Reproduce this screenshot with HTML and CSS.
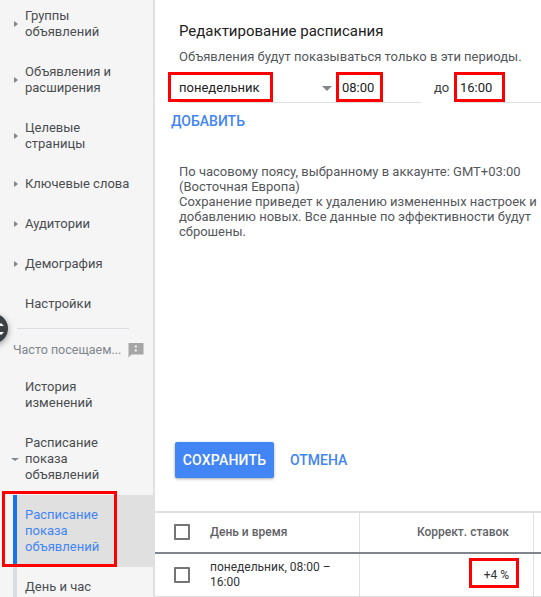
FILE: index.html
```html
<!DOCTYPE html>
<html lang="ru">
<head>
  <meta charset="UTF-8">
  <meta name="viewport" content="width=device-width, initial-scale=1.0">
  <title>Расписание показа объявлений</title>
  <link rel="stylesheet" href="styles.css">
</head>
<body>
  <div class="page">
    <nav class="sidebar">
      <div class="nav-item"><span class="arrow"></span>Группы<br>объявлений</div>
      <div class="nav-item"><span class="arrow"></span>Объявления и<br>расширения</div>
      <div class="nav-item"><span class="arrow"></span>Целевые<br>страницы</div>
      <div class="nav-item"><span class="arrow"></span>Ключевые слова</div>
      <div class="nav-item"><span class="arrow"></span>Аудитории</div>
      <div class="nav-item"><span class="arrow"></span>Демография</div>
      <div class="nav-item">Настройки</div>
      <div class="nav-divider"></div>
      <div class="nav-frequent">
        <span>Часто посещаем...</span>
        <svg class="feedback-icon" width="16" height="16" viewBox="0 0 16 16"><path d="M0.5 1h15v11.5H3.5l-3 3z" fill="#a6a6a6"/><path d="M6.8 3.5h2v2h-2zM6.8 7.5h2v2h-2z" fill="#f5f5f5"/></svg>
      </div>
      <div class="nav-item">История<br>изменений</div>
      <div class="nav-item"><span class="arrow-down"></span>Расписание<br>показа<br>объявлений</div>
      <div class="nav-item nav-active">Расписание<br>показа<br>объявлений</div>
      <div class="nav-item nav-sub">День и час</div>
    </nav>

    <main class="content">
      <section class="editor">
        <h1 class="editor-title">Редактирование расписания</h1>
        <p class="editor-sub">Объявления будут показываться только в эти периоды.</p>
        <div class="period-row">
          <div class="field field-day">понедельник<span class="caret"></span></div>
          <div class="field field-from">08:00</div>
          <div class="period-to">до</div>
          <div class="field field-till">16:00</div>
        </div>
        <a class="add-link">ДОБАВИТЬ</a>
        <p class="editor-note">По часовому поясу, выбранному в аккаунте: GMT+03:00<br>(Восточная Европа)<br>Сохранение приведет к удалению измененных настроек и<br>добавлению новых. Все данные по эффективности будут<br>сброшены.</p>
        <div class="actions">
          <button class="btn-save">СОХРАНИТЬ</button>
          <a class="btn-cancel">ОТМЕНА</a>
        </div>
      </section>

      <section class="table">
        <div class="table-row table-head">
          <div class="cell cell-check"><span class="checkbox"></span></div>
          <div class="cell cell-day">День и время</div>
          <div class="cell cell-bid">Коррект. ставок</div>
          <div class="cell cell-rest"></div>
        </div>
        <div class="table-row table-body">
          <div class="cell cell-check"><span class="checkbox"></span></div>
          <div class="cell cell-day">понедельник, 08:00 –<br>16:00</div>
          <div class="cell cell-bid">+4 %</div>
          <div class="cell cell-rest"></div>
        </div>
      </section>
    </main>

    <!-- плавающая кнопка и красные рамки поверх скриншота -->
    <div class="float-btn"><svg width="8" height="14" viewBox="0 0 8 14"><path d="M1 4l3-3 3 3zM1 10l3 3 3-3z" fill="#fff"/></svg></div>
    <div class="mark mark-nav"></div>
    <div class="mark mark-day"></div>
    <div class="mark mark-from"></div>
    <div class="mark mark-till"></div>
    <div class="mark mark-bid"></div>
  </div>
</body>
</html>
```

FILE: styles.css
```css
html, body {
  margin: 0;
  height: 100%;
  overflow: hidden;
}
body {
  font-family: Roboto, "Liberation Sans", sans-serif;
  font-size: 13px;
  line-height: 16px;
  color: #3c4043;
  background: white;
}
.page {
  position: relative;
  display: flex;
  width: 541px;
  height: 597px;
  overflow: hidden;
}

/* левое меню */
.sidebar {
  flex: none;
  width: 153px;
  height: 601px;
  margin-top: -4px;
  background: #f5f5f5;
  border-right: 2px solid #e0e0e0;
}
.nav-item {
  position: relative;
  padding: 12px 8px 12px 25px;
  color: #4a4d50;
}
.arrow {
  position: absolute;
  left: 14px;
  top: 50%;
  margin-top: -3px;
  border-left: 4px solid #80868b;
  border-top: 3px solid transparent;
  border-bottom: 3px solid transparent;
}
.arrow-down {
  position: absolute;
  left: 11px;
  top: 50%;
  margin-top: -1px;
  border-top: 3px solid #80868b;
  border-left: 4px solid transparent;
  border-right: 4px solid transparent;
}
.nav-divider {
  height: 1px;
  margin: 4px 24px 0 17px;
  background: #dadce0;
}
.nav-frequent {
  display: flex;
  justify-content: space-between;
  align-items: center;
  box-sizing: border-box;
  height: 38px;
  padding: 4px 9px 0 13px;
  font-size: 12.5px;
  color: #80868b;
}
.nav-active {
  margin-left: 13px;
  padding-left: 8px;
  background: #e0e0e0;
  border-left: 4px solid #1a73e8;
  color: #4285f4;
}
.nav-sub {
  margin-left: 13px;
  padding-left: 8px;
  border-left: 4px solid #dadce0;
}

/* правая часть */
.content {
  flex: 1;
  display: flex;
  flex-direction: column;
  min-width: 0;
}
.editor {
  height: 511px;
  padding: 0 0 0 16px;
  box-sizing: border-box;
}
.editor-title {
  margin: 21px 0 0 8px;
  font-size: 15px;
  line-height: 20px;
  font-weight: 400;
  color: #212121;
}
.editor-sub {
  margin: 8px 0 0 8px;
  color: #54575b;
  white-space: nowrap;
}
.period-row {
  display: flex;
  align-items: center;
  height: 30px;
  margin-top: 8px;
  white-space: nowrap;
  color: #212121;
}
.field {
  height: 29px;
  line-height: 29px;
  border-bottom: 1px solid #e0e0e0;
}
.field-day {
  position: relative;
  width: 163px;
  margin-left: 8px;
}
.caret {
  position: absolute;
  right: 10px;
  top: 13px;
  border-top: 5px solid #80868b;
  border-left: 5px solid transparent;
  border-right: 5px solid transparent;
}
.field-from {
  width: 79px;
}
.period-to {
  width: 26px;
  margin-left: 13px;
  color: #3c4043;
}
.field-till {
  flex: 1;
}
.add-link {
  display: block;
  margin-top: 10px;
  font-size: 14px;
  font-weight: 500;
  color: #4285f4;
}
.editor-note {
  margin: 35px 0 0 8px;
  line-height: 15px;
  color: #54575b;
  white-space: nowrap;
}
.actions {
  display: flex;
  align-items: center;
  gap: 16px;
  margin-top: 203px;
  padding-left: 4px;
}
.btn-save {
  width: 99px;
  height: 36px;
  padding: 0;
  border: 0;
  border-radius: 2px;
  background: #4285f4;
  box-shadow: 0 1px 3px rgba(0,0,0,0.35);
  color: white;
  font-family: inherit;
  font-size: 14px;
  font-weight: 500;
  letter-spacing: 0.2px;
}
.btn-cancel {
  font-size: 14px;
  font-weight: 500;
  color: #4285f4;
}

/* таблица */
.table {
  border-top: 2px solid #e0e0e0;
}
.table-row {
  display: flex;
}
.table-head {
  box-sizing: border-box;
  height: 41px;
  padding-bottom: 0;
  border-bottom: 2px solid #80868b;
  color: #5f6368;
  font-size: 12px;
  font-weight: 500;
}
.table-head .cell-check,
.table-head .cell-day {
  margin-top: -2px;
}
.table-body {
  height: 42px;
  border-bottom: 1px solid #e0e0e0;
  font-size: 12px;
  line-height: 15px;
  color: #303336;
}
.cell {
  display: flex;
  align-items: center;
  box-sizing: border-box;
}
.cell-check {
  width: 55px;
  padding-left: 19px;
}
.checkbox {
  width: 12px;
  height: 12px;
  border: 2px solid #757575;
  border-radius: 1px;
}
.cell-day {
  display: block;
  align-self: center;
  width: 149px;
}
.cell-bid {
  align-self: stretch;
  justify-content: flex-end;
  width: 175px;
  padding-right: 24px;
  border-left: 1px solid #e0e0e0;
  border-right: 1px solid #e0e0e0;
}
.table-head .cell-bid {
  padding-bottom: 2px;
}
.cell-rest {
  flex: 1;
}

/* поверх */
.float-btn {
  position: absolute;
  left: -20px;
  top: 314px;
  display: flex;
  align-items: center;
  justify-content: flex-end;
  box-sizing: border-box;
  width: 28px;
  height: 29px;
  padding-right: 3px;
  border-radius: 50%;
  background: #3c4043;
  box-shadow: 0 2px 6px rgba(0,0,0,0.4);
}
.mark {
  position: absolute;
  box-sizing: border-box;
  border: 3px solid #f00;
}
.mark-nav { left: 2px; top: 491px; width: 115px; height: 76px; }
.mark-day { left: 168px; top: 72px; width: 105px; height: 30px; }
.mark-from { left: 336px; top: 72px; width: 47px; height: 30px; }
.mark-till { left: 454px; top: 72px; width: 51px; height: 30px; }
.mark-bid { left: 469px; top: 558px; width: 50px; height: 30px; }
```
